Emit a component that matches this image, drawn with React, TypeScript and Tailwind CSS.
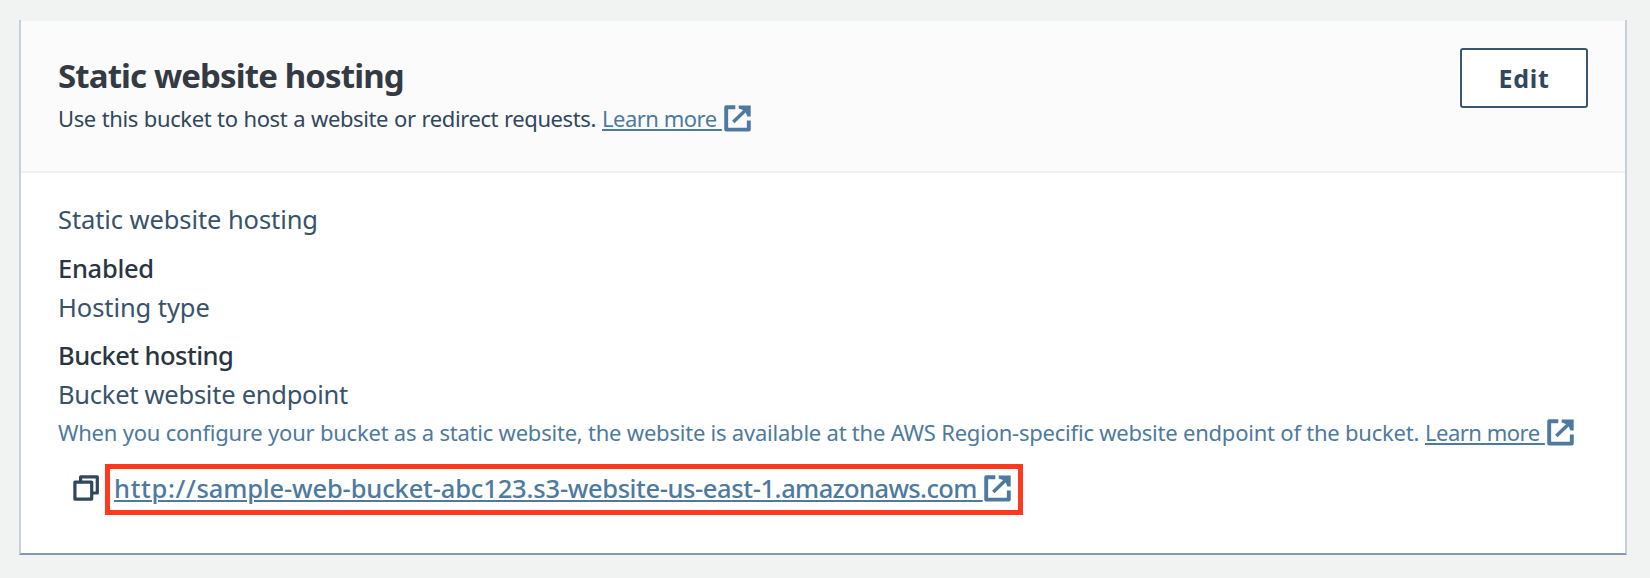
import type { ReactNode } from "react";

function ExternalIcon() {
  return (
    <svg className="block h-[27px] w-[27px] shrink-0" viewBox="0 0 27 27" fill="none" stroke="#4d7a9e" strokeWidth="3.9" aria-hidden="true">
      <path d="M11.3 2.2H2.2V24.6H24.8V15.5" strokeLinejoin="round" />
      <path d="M9.3 17L23.5 3.3" strokeWidth="3.5" />
      <path d="M14.7 0.4H26.7V11.6H23.4L21 5.8L14.7 3.6Z" fill="#4d7a9e" stroke="none" />
    </svg>
  );
}

function CopyIcon() {
  return (
    <svg className="block h-[26px] w-[27px] shrink-0" viewBox="0 0 27 26" fill="none" stroke="#30475c" strokeWidth="3.2" strokeLinejoin="round" aria-hidden="true">
      <path d="M7.6 6V1.9H24.3V18H20" />
      <path d="M1.9 7.2H18.7V24.1H1.9Z" />
    </svg>
  );
}

function LearnMore() {
  return (
    <a href="#" className="flex items-start text-[#4d7a9e]">
      <span className="w-[121px] whitespace-pre tracking-[-0.5px] underline decoration-2 underline-offset-[2px]">{"Learn more "}</span>
      <span className="pt-[5px] pl-[1px]">
        <ExternalIcon />
      </span>
    </a>
  );
}

function Label({ children, className }: { children: ReactNode; className: string }) {
  return <div className={`whitespace-nowrap text-[25.5px] leading-[36px] text-[#38526a] ${className}`}>{children}</div>;
}

function Value({ children, className }: { children: ReactNode; className: string }) {
  return <div className={`whitespace-nowrap text-[25.5px] leading-[36px] font-medium text-[#2b3542] ${className}`}>{children}</div>;
}

export default function App() {
  return (
    <div className="h-[578px] w-[1650px] bg-[#f1f3f3] pt-[20px] pl-[19px] font-['Noto_Sans',sans-serif]">
      <section className="flex h-[535px] w-[1608px] flex-col border-x-2 border-b-2 border-x-[#c3d1de] border-b-[#8499b0] bg-white">
        <header className="flex h-[153px] items-start justify-between border-t border-b-2 border-t-[#f3f4f4] border-b-[#eff0f0] bg-[#fbfbfb] pt-[35px] pr-[37px] pl-[37px]">
          <div>
            <h2 className="text-[33px] leading-[40px] font-bold tracking-[-0.88px] whitespace-nowrap text-[#343a43]">Static website hosting</h2>
            <div className="mt-[4px] flex text-[22px] leading-[36px] whitespace-nowrap text-[#30475c]">
              <span className="w-[544px] tracking-[-0.4px] [word-spacing:0.6px]">Use this bucket to host a website or redirect requests.</span>
              <LearnMore />
            </div>
          </div>
          <button className="-mt-[8px] h-[60px] w-[128px] rounded-[3px] border-2 border-[#3a5670] bg-white text-[25px] leading-[54px] font-bold tracking-[0.7px] text-[#30475c]">Edit</button>
        </header>

        <div className="flex flex-col pt-[28px] pl-[37px]">
          <Label className="tracking-[-0.09px]">Static website hosting</Label>
          <Value className="mt-[13px] tracking-[-0.3px]">Enabled</Value>
          <Label className="mt-[3px] tracking-[-0.08px]">Hosting type</Label>
          <Value className="mt-[12px] tracking-[-0.55px]">Bucket hosting</Value>
          <Label className="mt-[3px] tracking-[-0.26px]">Bucket website endpoint</Label>
          <div className="mt-[2px] flex h-[36px] text-[22px] leading-[36px] whitespace-nowrap text-[#4d7a9e]">
            <span className="w-[1367px] tracking-[-0.22px]">When you configure your bucket as a static website, the website is available at the AWS Region-specific website endpoint of the bucket.</span>
            <LearnMore />
          </div>
          <div className="mt-[14px] flex items-start pl-[15px]">
            <div className="pt-[11px]">
              <CopyIcon />
            </div>
            <a href="#" className="ml-[5px] flex h-[51px] w-[918px] items-start border-[5px] border-[#ff381e] pl-[4px] text-[25.5px] leading-[36px] font-medium whitespace-nowrap text-[#4d7a9e]">
              <span className="mt-[1px] w-[869px] whitespace-pre underline decoration-2 underline-offset-[2px]">
                <span className="tracking-[0.65px]">http://</span>
                <span className="tracking-[-0.15px]">sample-web-bucket-abc123.s3</span>
                <span className="tracking-[-0.4px]">-website-us-east-1.</span>
                <span className="tracking-[-0.63px]">{"amazonaws.com "}</span>
              </span>
              <span className="pt-[6px] pl-[1px]">
                <ExternalIcon />
              </span>
            </a>
          </div>
        </div>
      </section>
    </div>
  );
}
